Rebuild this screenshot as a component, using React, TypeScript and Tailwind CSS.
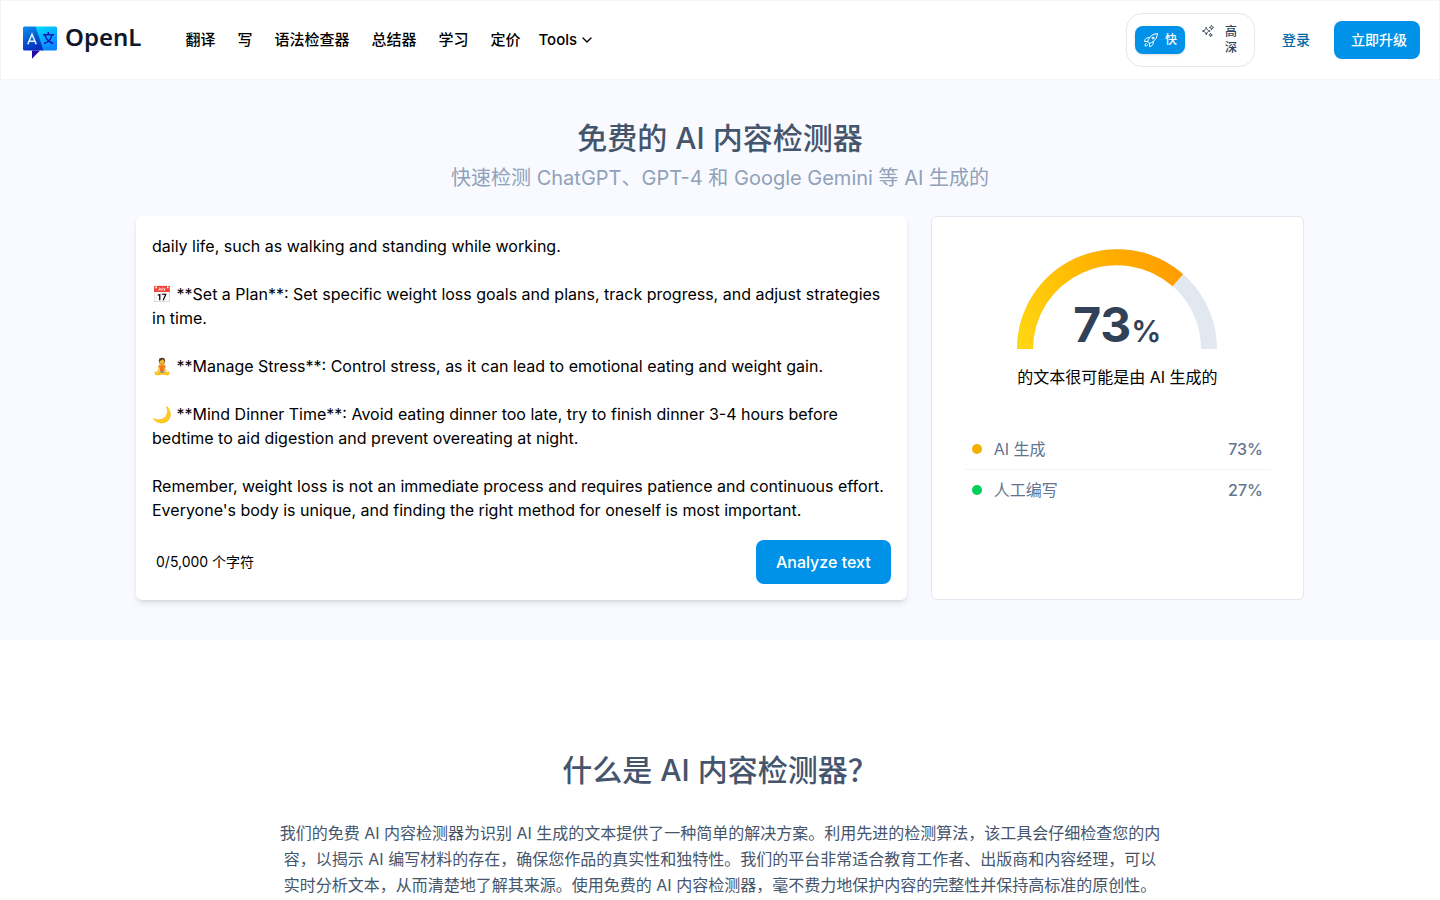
import { ChevronDown } from "lucide-react";
import { HiOutlineRocketLaunch, HiOutlineSparkles } from "react-icons/hi2";

const navLinks = ["翻译", "写", "语法检查器", "总结器", "学习", "定价"];

const sampleText = `daily life, such as walking and standing while working.

📅 **Set a Plan**: Set specific weight loss goals and plans, track progress, and adjust strategies in time.

🧘 **Manage Stress**: Control stress, as it can lead to emotional eating and weight gain.

🌙 **Mind Dinner Time**: Avoid eating dinner too late, try to finish dinner 3-4 hours before bedtime to aid digestion and prevent overeating at night.

Remember, weight loss is not an immediate process and requires patience and continuous effort. Everyone's body is unique, and finding the right method for oneself is most important.`;

function LogoMark() {
  return (
    <svg viewBox="0 0 34 34" className="h-[34px] w-[34px]" aria-hidden="true">
      <defs>
        <linearGradient id="logoLeft" x1="0" y1="0" x2="0.4" y2="1">
          <stop offset="0" stopColor="#0a90f0" />
          <stop offset="1" stopColor="#0530c0" />
        </linearGradient>
        <linearGradient id="logoRight" x1="0" y1="0" x2="0.5" y2="1">
          <stop offset="0" stopColor="#00e0ff" />
          <stop offset="1" stopColor="#0a84ff" />
        </linearGradient>
      </defs>
      <path d="M12 1.5H32.5A1.5 1.5 0 0 1 34 3V24A1.5 1.5 0 0 1 32.5 25.5H19Z" fill="url(#logoRight)" />
      <path d="M1.5 1.5H12.5L20.5 25.5H1.5A1.5 1.5 0 0 1 0 24V3A1.5 1.5 0 0 1 1.5 1.5Z" fill="url(#logoLeft)" />
      <path d="M9 25.5H17L9 33.8Z" fill="#2308a8" />
      <path d="M4.8 19.2L9 9.3L13.2 19.2M6.3 16.3H11.7" fill="none" stroke="#dff3ff" strokeWidth="1.6" />
      <path d="M20 9.8H31M25.3 7V9.8M22 10.3C23 14 26 17 30.2 18.5M28.8 10.3C28 14 25.5 17 21 18.5" fill="none" stroke="#1c16b4" strokeWidth="1.5" />
    </svg>
  );
}

function Gauge() {
  return (
    <div className="relative h-[100px] w-[200px]">
      <svg viewBox="0 0 200 100" className="h-[100px] w-[200px]" aria-hidden="true">
        <defs>
          <linearGradient id="gauge" gradientUnits="userSpaceOnUse" x1="0" y1="100" x2="166" y2="26">
            <stop offset="0" stopColor="#ffd814" />
            <stop offset="0.5" stopColor="#ffb800" />
            <stop offset="1" stopColor="#ff9c00" />
          </linearGradient>
        </defs>
        <path d="M8 100A92 92 0 0 1 192 100" fill="none" stroke="#e2e8f0" strokeWidth="16" />
        <path d="M8 100A92 92 0 0 1 160.8 31.2" fill="none" stroke="url(#gauge)" strokeWidth="16" />
      </svg>
      <p className="absolute inset-x-0 bottom-0 flex items-baseline justify-center text-5xl font-bold text-slate-700">
        73<span className="text-3xl font-semibold">%</span>
      </p>
    </div>
  );
}

function ResultRow({ dot, label, value }: { dot: string; label: string; value: string }) {
  return (
    <li className="box-content flex h-10 items-center px-2 text-slate-500">
      <span className={`mr-3 size-[10px] rounded-full ${dot}`} />
      <span>{label}</span>
      <span className="ml-auto font-medium">{value}</span>
    </li>
  );
}

export default function App() {
  return (
    <div lang="zh-CN" className="min-h-screen bg-white font-[Inter,'Noto_Sans_CJK_SC',sans-serif] text-base text-black">
      <header className="flex h-20 items-center border border-slate-100 pr-[19px] pl-[22px]">
        <a href="#" className="flex items-start gap-2">
          <span className="pt-1">
            <LogoMark />
          </span>
          <span className="font-['Noto_Sans'] text-2xl font-semibold text-slate-900">OpenL</span>
        </a>
        <nav className="ml-11 flex items-center text-[15px] font-medium">
          {navLinks.map((label) => (
            <a key={label} href="#" className="mr-[22px]">
              {label}
            </a>
          ))}
          <button type="button" className="-ml-1 flex items-center gap-0.5">
            Tools
            <ChevronDown className="size-4" />
          </button>
        </nav>
        <div className="ml-auto flex items-center">
          <div className="flex h-[54px] w-[129px] items-center rounded-2xl border border-slate-200 px-2 text-xs font-medium">
            <button type="button" className="flex h-7 w-[50px] items-center justify-center gap-1.5 rounded-lg bg-[#0092e8] text-white shadow-sm">
              <HiOutlineRocketLaunch className="size-4" />快
            </button>
            <button type="button" className="ml-4 flex items-start gap-2 text-slate-700">
              <HiOutlineSparkles className="size-[14px]" />
              <span className="w-4 text-center">高深</span>
            </button>
          </div>
          <a href="#" className="ml-[27px] text-sm font-medium text-sky-700">登录</a>
          <button type="button" className="ml-6 h-[38px] w-[86px] rounded-lg bg-[#0092e8] pl-1 text-sm font-medium text-white">
            立即升级
          </button>
        </div>
      </header>

      <main>
        <section className="bg-[#f8faff] px-6 pt-10 pb-10">
          <div className="mx-auto max-w-[1168px]">
            <h1 className="text-center text-3xl font-medium text-slate-600">免费的 AI 内容检测器</h1>
            <h2 className="mt-2 text-center text-xl text-slate-400">
              快速检测 ChatGPT、GPT-4 和 Google Gemini 等 AI 生成的
            </h2>
            <div className="mt-6 grid grid-cols-3 gap-6">
              <div className="col-span-2 flex flex-col rounded-md bg-white p-4 shadow-md">
                <textarea
                  aria-label="文本"
                  rows={12}
                  defaultValue={sampleText}
                  className="mt-0.5 block w-full resize-none overflow-hidden outline-none"
                />
                <div className="mt-auto flex items-center justify-between pl-1">
                  <span className="text-sm">0/5,000 个字符</span>
                  <button type="button" className="h-11 rounded-lg bg-[#0092e8] px-5 font-medium text-white">
                    Analyze text
                  </button>
                </div>
              </div>
              <div className="flex h-96 flex-col items-center rounded-md border border-slate-200 bg-white p-8">
                <Gauge />
                <p className="mt-4">的文本很可能是由 AI 生成的</p>
                <ul className="mt-10 w-full divide-y divide-slate-100">
                  <ResultRow dot="bg-yellow-500" label="AI 生成" value="73%" />
                  <ResultRow dot="bg-[#00d05a]" label="人工编写" value="27%" />
                </ul>
              </div>
            </div>
          </div>
        </section>

        <section className="px-6 pt-28 text-center text-slate-600">
          <h2 className="text-3xl font-medium">什么是 AI 内容检测器？</h2>
          <p className="mx-auto mt-8 max-w-[884px] leading-[26px]">
            我们的免费 AI 内容检测器为识别 AI 生成的文本提供了一种简单的解决方案。利用先进的检测算法，该工具会仔细检查您的内容，以揭示 AI 编写材料的存在，确保您作品的真实性和独特性。我们的平台非常适合教育工作者、出版商和内容经理，可以实时分析文本，从而清楚地了解其来源。使用免费的 AI 内容检测器，毫不费力地保护内容的完整性并保持高标准的原创性。
          </p>
        </section>
      </main>
    </div>
  );
}
